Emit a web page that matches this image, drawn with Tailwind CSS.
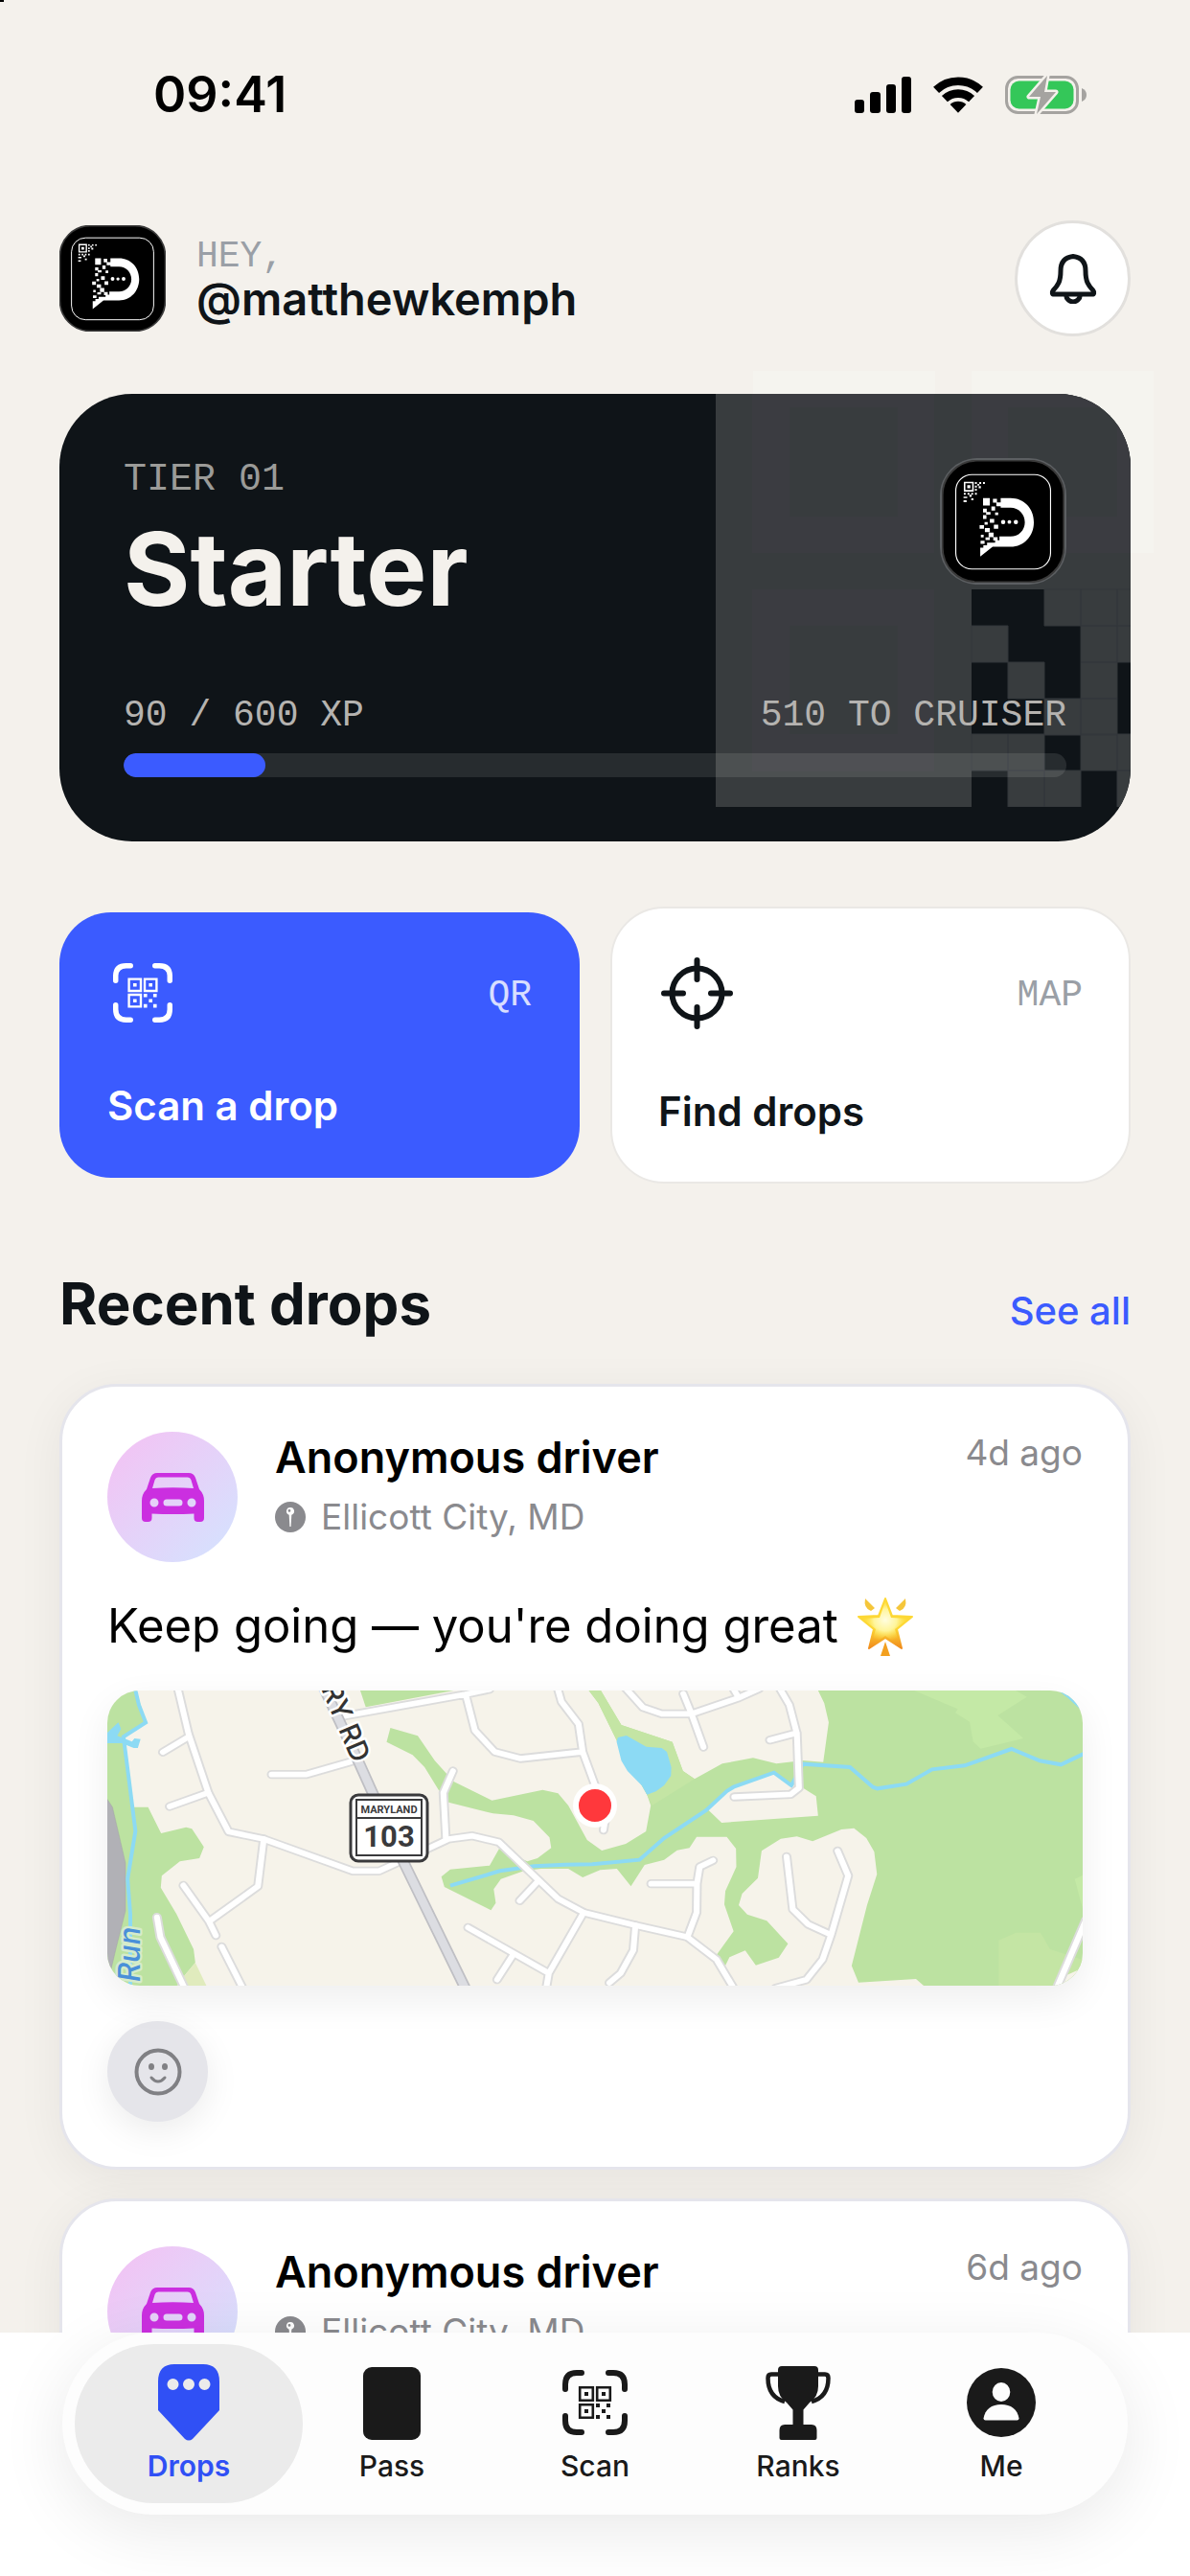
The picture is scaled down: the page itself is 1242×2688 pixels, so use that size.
<!DOCTYPE html>
<html lang="en">
<head>
    <meta charset="UTF-8">
    <meta name="viewport" content="width=device-width, initial-scale=1.0">
    <title>Drops</title>
    <script src="https://cdn.jsdelivr.net/npm/@tailwindcss/browser@4"></script>
</head>
<body class="bg-[#f4f1ec] font-['Inter',sans-serif] text-[#0f1418] antialiased">

    <!-- Shared icons -->
    <svg class="hidden" aria-hidden="true">
        <symbol id="logo" viewBox="0 0 396 396">
            <rect x="2" y="2" width="392" height="392" rx="112" fill="#000" stroke="#3a3a3a" stroke-width="6"/>
            <rect x="45" y="47" width="306" height="305" rx="52" fill="none" stroke="#fff" stroke-width="3.5"/>
            <g fill="#fff">
                <path fill-rule="evenodd" d="M71 70h32v32H71zM76 75v22h22V75z"/>
                <path d="M82 81h10v10H82zM107 71h6v6h-6zM115 77h6v6h-6zM121 71h6v6h-6zM133 71h6v6h-6zM107 83h6v6h-6zM119 84h7v7h-7zM107 93h6v6h-6zM71 106h6v6h-6zM83 106h6v6h-6zM95 106h6v6h-6zM107 106h6v6h-6zM89 112h7v7h-7zM70 118h12v5H70zM95 124h7v6h-7zM70 130h10v6H70z"/>
                <path d="M133 123h22v24h-22zM165 125h13v13h-13zM176 137h18v12h-18zM133 157h12v12h-12zM160 150h12v13h-12zM143 168h14v8h-14zM172 169h10v9h-10zM133 178h11v12h-11zM155 190h14v13h-14zM138 200h10v9h-10zM122 210h14v12h-14zM168 209h14v13h-14zM139 220h16v13h-16zM151 234h16v15h-16zM126 241h9v9h-9zM141 250h14v8h-14zM166 249h14v11h-14zM125 261h13v10h-13z"/>
                <path d="M190 123h32c44 0 75 34 75 78s-31 79-75 79h-58l-40 32v-29h10v-8h12v-8h26v-8h14v-12h36c26 0 46-20 46-46s-20-47-46-47h-32z"/>
                <circle cx="198" cy="200" r="7"/><circle cx="218" cy="200" r="6"/><circle cx="239" cy="200" r="7"/>
            </g>
        </symbol>
        <symbol id="scan" viewBox="0 0 68 68">
            <path fill="none" stroke="currentColor" stroke-width="6" stroke-linecap="round" d="M3 20v-5Q3 3 15 3h5M48 3h5q12 0 12 12v5M65 48v5q0 12-12 12h-5M20 65h-5Q3 65 3 53v-5"/>
            <path fill="none" stroke="currentColor" stroke-width="2.600" d="M18.200 18.200h13.600v13.600H18.200zM36.200 18.200h13.600v13.600H36.200zM18.200 36.200h13.600v13.600H18.200z"/>
            <path fill="currentColor" d="M23 23h4v4h-4zM41 23h4v4h-4zM23 41h4v4h-4zM35 35h4v4h-4zM46 35h4v4h-4zM41 41h4v4h-4zM35 47h4v4h-4zM46 47h4v4h-4z"/>
        </symbol>
        <symbol id="car" viewBox="0 0 65 51">
            <path fill="#cb2fe0" fill-rule="evenodd" d="M16 0h33q5 0 7 5l4 12q5 5 5 12v18q0 4-4 4h-2.500q-4 0-4-4v-4.500q-22 1-44 0V47q0 4-4 4H4q-4 0-4-4V29q0-7 5-12L9 5q2-5 7-5zM17.500 4.500q-3 0-4 3L11 16q21.500-1.500 43 0l-2.500-8.500q-1-3-4-3zM13 26.500a4.500 4.500 0 1 0 0 9 4.500 4.500 0 0 0 0-9zM52 26.500a4.500 4.500 0 1 0 0 9 4.500 4.500 0 0 0 0-9zM26 27.500q-3.500 0-3.500 3.500t3.500 3.500h13q3.500 0 3.500-3.500T39 27.500z"/>
        </symbol>
        <symbol id="place" viewBox="0 0 32 32">
            <circle cx="16" cy="16" r="16" fill="#8a8a8e"/>
            <path fill="#fff" fill-rule="evenodd" d="M16 6a4 4 0 0 1 1.300 7.800L16.600 26h-1.200l-.7-12.200A4 4 0 0 1 16 6zm-1 2a1.400 1.400 0 1 0 0 2.800A1.400 1.400 0 0 0 15 8z"/>
        </symbol>
    </svg>

    <div class="relative flex h-screen flex-col overflow-hidden">
        <span class="absolute top-0 left-0 h-[2px] w-[4px] bg-black"></span>

        <div class="min-h-0 flex-1 overflow-y-auto px-[62px] [scrollbar-width:none]">

            <!-- Status bar -->
            <div class="flex h-[198px] items-center justify-between pr-[46px] pl-[98px] text-black">
                <span class="text-[52px] leading-[60px] font-semibold">09:41</span>
                <div class="flex items-center gap-[23px]">
                    <svg class="h-[38px] w-[59px]" viewBox="0 0 59 38" fill="currentColor">
                        <rect y="24" width="10" height="14" rx="3"/><rect x="16" y="16" width="11" height="22" rx="3"/><rect x="33" y="8" width="10" height="30" rx="3"/><rect x="49" width="10" height="38" rx="3"/>
                    </svg>
                    <svg class="h-[38px] w-[52px]" viewBox="0 0 51 37">
                        <path fill="none" stroke="currentColor" stroke-width="8.500" d="M3 13.500a32.700 32.700 0 0 1 45 0M11.700 22.600a20 20 0 0 1 27.600 0"/>
                        <path fill="currentColor" d="M25.500 37l-8.200-8.600a12 12 0 0 1 16.400 0z"/>
                    </svg>
                    <svg class="h-[40px] w-[85px]" viewBox="0 0 85 40">
                        <rect x="1.500" y="1.500" width="74" height="37" rx="12" fill="none" stroke="#a5a3a0" stroke-width="3"/>
                        <rect x="5.500" y="5.500" width="66" height="29" rx="9" fill="#34c759"/>
                        <path d="M80 13q5 2 5 7t-5 7z" fill="#a5a3a0"/>
                        <path d="M44 0L25 22h12l-4 18 20-23H41z" fill="#a5a3a0" stroke="#f4f1ec" stroke-width="5" paint-order="stroke" stroke-linejoin="round"/>
                    </svg>
                </div>
            </div>

            <!-- Greeting -->
            <header class="mt-[32px] flex items-center justify-between">
                <div class="flex items-center gap-[32px]">
                    <svg class="size-[111px]"><use href="#logo"/></svg>
                    <div>
                        <p class="font-['Liberation_Mono',monospace] text-[38px] leading-[42px] text-[#9a9fa6]">HEY,</p>
                        <h1 class="text-[47px] leading-[46px] font-semibold">@matthewkemph</h1>
                    </div>
                </div>
                <button class="grid size-[121px] place-items-center rounded-full border-3 border-[#e2e0dd] bg-white" aria-label="Notifications">
                    <svg class="h-[52px] w-[50px]" viewBox="0 0 48 50" fill="none" stroke="currentColor" stroke-width="4.800" stroke-linejoin="round">
                        <path d="M24 2.500C15.500 3.500 11.500 9 11.500 17c0 11-3 15-7.500 19.500-1.500 2-1 4 1 4h38c2 0 2.500-2 1-4C39.500 32 36.500 28 36.500 17c0-8-4-13.500-12.500-14.500z"/>
                        <path d="M17 41a7 7 0 0 0 14 0"/>
                    </svg>
                </button>
            </header>

            <!-- Tier card -->
            <section class="relative mt-[60px]">
                <svg class="absolute -top-[24px] -right-[24px] h-[190px] w-[418px]" viewBox="0 0 418 190" fill="#f5f4ef"><path d="M0 0h190v190H0zM228 0h190v190H228z"/></svg>
                <div class="relative overflow-hidden rounded-[76px] bg-[#0f1418] p-[67px] text-[#f4f1ec]">
                    <svg class="absolute top-0 right-0 h-[431px] w-[433px]" viewBox="0 0 433 431">
                        <path fill="#383c3e" d="M0 0h433v204H267v227H0z"/>
                        <path fill="#3b3c41" fill-rule="evenodd" d="M38 0h190v166H38zM77 14v114h113V14zM267 0h166v166H267zM305 14v114h114V14zM38 204h190v190H38zM77 242v113h113V242z"/>
                        <path fill="#383c3e" stroke="#33373a" d="M343 204h38v38h-38zM381 204h38v38h-38zM419 204h38v38h-38zM267 242h38v38h-38zM381 242h38v38h-38zM419 242h38v38h-38zM305 280h38v38h-38zM381 280h38v38h-38zM343 318h38v38h-38zM381 318h38v38h-38zM267 355h38v38h-38zM305 355h38v38h-38zM381 355h38v38h-38zM419 355h38v38h-38zM305 393h38v38h-38zM343 393h38v38h-38zM419 393h38v38h-38z"/>
                    </svg>
                    <div class="relative flex items-start justify-between">
                        <div>
                            <p class="font-['Liberation_Mono',monospace] text-[40px] leading-[46px] text-[#9b9b98]">TIER 01</p>
                            <h2 class="mt-[14px] text-[106px] leading-[112px] font-bold">Starter</h2>
                        </div>
                        <div class="rounded-[39px] bg-[#5c5f62] p-[2px]">
                            <svg class="size-[128px]"><use href="#logo"/></svg>
                        </div>
                    </div>
                    <div class="relative mt-[74px] flex justify-between font-['Liberation_Mono',monospace] text-[38px] leading-[46px] text-[#b5b3b0]">
                        <span>90 / 600 XP</span>
                        <span>510 TO CRUISER</span>
                    </div>
                    <div class="relative mt-[16px] h-[25px] overflow-hidden rounded-full bg-white/10" role="progressbar" aria-valuenow="90" aria-valuemax="600" aria-label="XP">
                        <div class="h-full rounded-full bg-[#3b5bff]" style="width: 15%"></div>
                    </div>
                </div>
            </section>

            <!-- Quick actions -->
            <div class="mt-[68px] grid grid-cols-2 items-center gap-[32px]">
                <button class="rounded-[54px] bg-[#3b5bff] p-[50px] text-left text-white">
                    <span class="flex h-[68px] items-center justify-between">
                        <svg class="mx-[6px] size-[62px]"><use href="#scan"/></svg>
                        <span class="pt-[5px] font-['Liberation_Mono',monospace] text-[38px] leading-[40px] text-white/80">QR</span>
                    </span>
                    <span class="mt-[59px] block text-[42px] leading-[50px] font-semibold">Scan a drop</span>
                </button>
                <button class="rounded-[56px] border-2 border-[#eae8e5] bg-white p-[48px] text-left">
                    <span class="flex h-[80px] items-center justify-between">
                        <svg class="mx-[3px] size-[75px]" viewBox="0 0 75 75" fill="none" stroke="currentColor" stroke-width="6" stroke-linecap="round">
                            <circle cx="37.500" cy="37.500" r="26"/>
                            <path d="M37.500 3v20M37.500 52v20M3 37.500h20M52 37.500h20"/>
                        </svg>
                        <span class="pt-[5px] font-['Liberation_Mono',monospace] text-[38px] leading-[40px] text-[#9a9fa6]">MAP</span>
                    </span>
                    <span class="mt-[59px] block text-[42px] leading-[50px] font-semibold">Find drops</span>
                </button>
            </div>

            <!-- Recent drops -->
            <div class="mt-[90px] flex items-baseline justify-between">
                <h2 class="text-[60px] leading-[70px] font-bold">Recent drops</h2>
                <a href="#" class="text-[40px] leading-[46px] font-medium text-[#3b5bff]">See all</a>
            </div>

            <div class="mt-[49px] space-y-[30px] pb-[60px]">
                <article class="rounded-[60px] border-3 border-[#e5e5ec] bg-white p-[47px] shadow-[0_10px_50px_rgba(0,0,0,0.06)]">
                    <div class="flex gap-[39px]">
                        <div class="grid size-[136px] place-items-center rounded-full bg-linear-135 from-[#f4c0f3] to-[#d2e4ff]">
                            <svg class="h-[51px] w-[65px]"><use href="#car"/></svg>
                        </div>
                        <div class="flex-1">
                            <h3 class="text-[45px] leading-[54px] font-semibold text-black">Anonymous driver</h3>
                            <p class="mt-[12px] flex items-center gap-[16px] text-[37px] leading-[46px] text-[#8a8a8e]">
                                <svg class="size-[32px]"><use href="#place"/></svg>Ellicott City, MD
                            </p>
                        </div>
                        <time class="text-[37px] leading-[44px] text-[#8a8a8e]">4d ago</time>
                    </div>

                    <p class="mt-[38px] flex items-center gap-[20px] text-[49px] leading-[58px] text-black">
                        Keep going — you're doing great
                        <svg class="-my-[2px] h-[62px] w-[58px]" viewBox="0 0 58 62" role="img" aria-label="glowing star">
                            <defs>
                                <linearGradient id="glow" x1="0" y1="0" x2="0" y2="1"><stop offset="0" stop-color="#fdd835"/><stop offset=".6" stop-color="#fdd835"/><stop offset="1" stop-color="#f08a1c"/></linearGradient>
                                <radialGradient id="core" cx=".5" cy=".42" r=".5"><stop offset="0" stop-color="#fffde0"/><stop offset=".5" stop-color="#fff59b"/><stop offset="1" stop-color="#fde23c" stop-opacity="0"/></radialGradient>
                            </defs>
                            <path fill="url(#glow)" stroke="url(#glow)" stroke-width="2" stroke-linejoin="round" d="M29 2l7 18 21 1-16 13 5 20-17-11-17 11 5-20L1 21l21-1z"/>
                            <path fill="url(#core)" d="M29 5l6 17 18 1-14 11 5 17-15-10-15 10 5-17L5 23l18-1z"/>
                            <path fill="#f5c63a" d="M8 2l10 10-4 3q-8-3-6-13zM50 2L40 12l4 3q8-3 6-13z"/>
                            <path fill="#f3a01f" d="M29 47l5 15H24z"/>
                        </svg>
                    </p>

                    <!-- Location preview -->
                    <div class="relative mt-[38px] h-[308px] overflow-hidden rounded-[34px] shadow-[0_14px_40px_rgba(0,0,0,0.07)]">
                        <svg class="size-full" viewBox="0 0 1020 308" preserveAspectRatio="xMidYMid slice" role="img" aria-label="Map of Ellicott City">
                            <defs>
                                <g id="roads">
                                    <path d="M268 70L300 215L358 400L417 522L520 545L780 645H857L1000 575L1060 545L1130 535L1207 555L1380 732L1455 775L1606 815L1758 852L1843 922L1895 1015"/>
                                    <path d="M225 273L300 225M245 443L358 400M520 545L503 693L360 803M285 690L360 803L380 847M208 790L218 852L290 1015M397 882L460 1015M543 343H643L775 303"/>
                                    <path d="M755 160L1110 92L1180 76M1110 92L1137 205L1195 272L1270 293L1452 272M1378 70L1390 115L1440 185L1452 272L1520 470L1513 517M1073 332L1045 400L1052 540"/>
                                    <path d="M1323 675L1268 738M1117 822L1353 965L1345 1015M1455 775L1353 965M1250 905L1202 985M1530 995L1563 965L1600 893L1606 815"/>
                                    <path d="M1575 70L1628 133L1683 153H1770L1908 103L1968 74M1746 90L1770 153L1805 257M1890 70L1908 103M2026 70L2056 125L2078 215L2084 385L2060 405L1895 413M1999 235L2078 213"/>
                                    <path d="M1758 852L1785 775L1786 685L1794 632L1833 612M1652 685H1786M2048 600L2066 765L2111 812L2178 845M2197 582L2228 660L2178 845L2153 922L2106 985L2015 1012M2922 800L2836 1015"/>
                                </g>
                            </defs>
                            <rect width="1020" height="308" fill="#f6f3ea"/>
                            <g transform="scale(.35714 .33333) translate(-60 -80)">
                                <g fill="#bce2a1">
                                    <path d="M60 80H148L175 180L110 225L125 350L138 445H182L220 527L293 508L310 513L345 570L332 605L275 615L222 660L219 697L265 780L315 890L320 932L290 970L268 1004H60z"/>
                                    <path d="M802 80L818 132L1075 80z"/>
                                    <path d="M890 197L970 222L1020 300L1075 365L1187 424L1335 391L1380 402L1410 440L1465 548L1508 581L1578 560L1637 521L1651 440L1640 406L1553 240L1498 120L1470 80H1505L1565 188L1714 241L1745 332L1779 357L1860 309L1950 291L2018 309L2096 299L2155 304L2171 180L2158 120L2140 80H2920V1010H2455L2426 983L2258 994L2238 942L2283 752L2312 655L2304 585L2281 542L2245 511L2208 515L2124 552L2078 537L2031 544L1975 582L1964 667L1918 716L1908 752L1933 781L1990 801L2052 873L2025 916L1958 940L1927 894L1881 915L1868 943L1843 908L1893 834L1866 750L1869 708L1901 632L1900 575L1873 538H1785L1764 573L1728 580L1690 610L1633 626L1593 693L1552 638L1503 642L1452 665L1410 638H1330L1280 645L1213 670L1192 702L1198 745L1184 768L1048 695L1039 663L1065 640L1180 628L1208 575L1290 615L1320 605L1360 573L1355 540L1308 488L1250 471L1190 465L1060 430L1030 390L990 320L955 282L879 241z"/>
                                </g>
                                <path fill="#c4e5a4" d="M1470 80H1505L1565 188L1714 241L1745 332L1779 357L1655 440L1640 406L1553 240L1498 120zM2668 862L2718 838H2790L2818 890L2920 925V1010H2668z"/>
                                <path fill="#c4e9a6" d="M2421 80L2548 138L2541 150L2583 178L2593 240L2615 262L2740 230L2665 158L2750 100L2718 80zM2890 670L2920 655V790z"/>
                                <path fill="#e0ebbd" d="M290 970L320 932L355 1010H262z"/>
                                <path fill="#f6f3ea" d="M1818 453L1858 494L2140 472L2134 411L2096 385L2068 375L2011 337L1888 382zM2920 945L2868 970L2850 1010H2920z"/>
                                <path fill="#b1b1b6" stroke="#9c9ca1" d="M50 400L78 445L116 620V770L90 880L70 970H50z"/>
                                <path fill="#8cdaf4" d="M1555 227L1580 221L1638 256L1683 260L1698 272L1711 320L1710 347L1690 377L1666 396L1640 406L1625 378L1583 332L1565 300L1551 240zM60 215L95 180L103 200L92 222L135 240L142 230L160 232L152 260H140L105 245H60z"/>
                                <g class="*:[vector-effect:non-scaling-stroke]" fill="none" stroke="#8cdaf4" stroke-width="4">
                                    <path d="M143 70L155 125L175 180L110 225L125 350L145 520L122 670L130 780V1010"/>
                                    <path d="M1065 691L1210 645L1310 630L1400 625L1480 624L1618 610L1690 542L1813 455L1873 395L1893 382L2011 337L2062 377L2096 310L2233 320L2300 382L2313 387L2398 373L2473 327L2568 315L2705 263L2788 300L2850 312L2920 276"/>
                                    <path d="M2838 70L2875 100L2915 140"/>
                                </g>
                            </g>
                            <g transform="scale(.35714 .33333) translate(-60 -80)" fill="none" stroke-linecap="round" stroke-linejoin="round">
                                <use href="#roads" stroke="#dcdcdc" stroke-width="28"/>
                                <use href="#roads" stroke="#ffffff" stroke-width="17"/>
                                <path d="M695 70L800 310L930 620L1110 1015" stroke="#bfbfc4" stroke-width="34"/>
                                <path d="M695 70L800 310L930 620L1110 1015" stroke="#dcdde2" stroke-width="24"/>
                            </g>
                            <text transform="translate(224 -2) rotate(67)" font-size="29" font-weight="500" fill="#333" stroke="#fff" stroke-width="5" stroke-linejoin="round" paint-order="stroke">RY RD</text>
                            <text transform="translate(35 304) rotate(-90)" font-size="31" font-style="italic" font-weight="500" fill="#4a90d9" stroke="#d5ebcb" stroke-width="5" stroke-linejoin="round" paint-order="stroke">Run</text>
                            <rect x="255" y="109" width="80" height="69" rx="8" fill="#fff" stroke="#3a3a3c" stroke-width="3"/>
                            <path d="M261 114h68v58h-68zM261 133h68" fill="none" stroke="#3a3a3c" stroke-width="2"/>
                            <text x="295" y="128" text-anchor="middle" font-family="Roboto, sans-serif" font-size="11" font-weight="700" fill="#3a3a3c">MARYLAND</text>
                            <text x="295" y="163" text-anchor="middle" font-family="Roboto, sans-serif" font-size="31" font-weight="700" fill="#3a3a3c">103</text>
                        </svg>
                        <span class="absolute top-[97px] left-1/2 size-[46px] -translate-x-1/2 rounded-full border-6 border-white bg-[#ff383c]"></span>
                    </div>

                    <button class="mt-[37px] grid size-[105px] place-items-center rounded-full bg-[#e5e5ea] shadow-[0_10px_36px_rgba(0,0,0,0.08)]" aria-label="React">
                        <svg class="size-[50px]" viewBox="0 0 50 50" fill="none" stroke="#808084" stroke-width="4">
                            <circle cx="25" cy="25" r="22.500"/>
                            <path d="M18 31q7 8 14 0" stroke-width="3" stroke-linecap="round"/>
                            <g fill="#808084" stroke="none"><ellipse cx="18" cy="19.500" rx="3" ry="3.500"/><ellipse cx="32" cy="19.500" rx="3" ry="3.500"/></g>
                        </svg>
                    </button>
                </article>

                <article class="rounded-[60px] border-3 border-[#e5e5ec] bg-white p-[47px] shadow-[0_10px_50px_rgba(0,0,0,0.06)]">
                    <div class="flex gap-[39px]">
                        <div class="grid size-[136px] place-items-center rounded-full bg-linear-135 from-[#f4c0f3] to-[#d2e4ff]">
                            <svg class="h-[51px] w-[65px]"><use href="#car"/></svg>
                        </div>
                        <div class="flex-1">
                            <h3 class="text-[45px] leading-[54px] font-semibold text-black">Anonymous driver</h3>
                            <p class="mt-[12px] flex items-center gap-[16px] text-[37px] leading-[46px] text-[#8a8a8e]">
                                <svg class="size-[32px]"><use href="#place"/></svg>Ellicott City, MD
                            </p>
                        </div>
                        <time class="text-[37px] leading-[44px] text-[#8a8a8e]">6d ago</time>
                    </div>
                </article>
            </div>
        </div>

        <!-- Tab bar -->
        <div class="relative h-[254px] shrink-0 bg-white px-[65px]">
            <nav class="grid grid-cols-5 rounded-full bg-[#fdfdfd] px-[26px] py-[12px] text-[30px] leading-[36px] font-medium text-[#1a1a1a] shadow-[0_16px_70px_rgba(0,0,0,0.09)]">
                <a href="#" aria-current="page" class="-mx-[13px] flex flex-col items-center gap-[8px] rounded-full bg-[#ebebeb] py-[21px] font-semibold text-[#3050f5]">
                    <svg class="h-[80px] w-[64px]" viewBox="0 0 64 80" fill="currentColor">
                        <path fill-rule="evenodd" d="M17 0h30q17 0 17 18v30L36 78q-4 3-8 0L0 48V18Q0 0 17 0zM15.500 15a6 6 0 1 0 0 12 6 6 0 0 0 0-12zM32 15a6 6 0 1 0 0 12 6 6 0 0 0 0-12zM48.500 15a6 6 0 1 0 0 12 6 6 0 0 0 0-12z"/>
                    </svg>
                    Drops
                </a>
                <a href="#" class="flex flex-col items-center gap-[8px] py-[21px]">
                    <svg class="h-[80px] w-[60px]" viewBox="0 0 60 80" fill="currentColor"><rect y="3" width="60" height="76" rx="9"/></svg>
                    Pass
                </a>
                <a href="#" class="flex flex-col items-center gap-[8px] py-[21px]">
                    <svg class="h-[80px] w-[68px]"><use href="#scan"/></svg>
                    Scan
                </a>
                <a href="#" class="flex flex-col items-center gap-[8px] py-[21px]">
                    <svg class="h-[80px] w-[68px]" viewBox="0 -2 68 80" fill="currentColor">
                        <path d="M17 0h34q4 0 4 4v17q0 11-9 17l-6.500 7.500V61H48q5.500 0 5.500 6v8q0 2-2 2h-35q-2 0-2-2v-8q0-6 5.500-6h8.500V45.500L22 38q-9-6-9-17V4q0-4 4-4z"/>
                        <path fill="none" stroke="currentColor" stroke-width="4.500" d="M14 8.500H6q-3.500 0-3.500 4C2.500 26 9 34 20 37M54 8.500h8q3.500 0 3.500 4C65.500 26 59 34 48 37"/>
                    </svg>
                    Ranks
                </a>
                <a href="#" class="flex flex-col items-center gap-[8px] py-[21px]">
                    <svg class="h-[80px] w-[72px]" viewBox="0 0 72 72">
                        <circle cx="36" cy="36" r="36" fill="currentColor"/>
                        <ellipse cx="36" cy="25" rx="9.300" ry="10" fill="#fdfdfd"/>
                        <path d="M17.500 52.500C19 43 26 38 36 38s17 5 18.500 14.500q0 2-2 2h-33q-2 0-2-2z" fill="#fdfdfd"/>
                    </svg>
                    Me
                </a>
            </nav>
        </div>
    </div>
</body>
</html>
